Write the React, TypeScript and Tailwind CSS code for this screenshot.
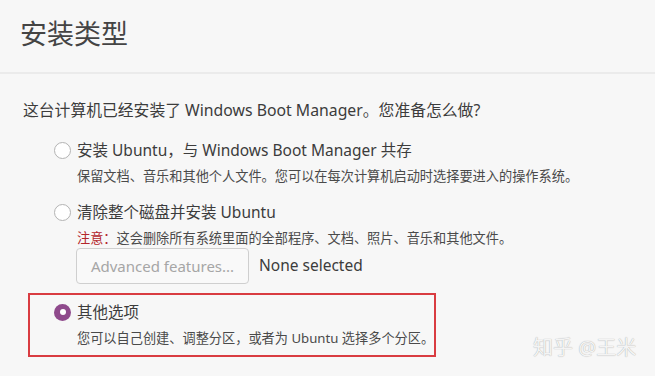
import React, { useState } from 'react';

const font = { fontFamily: '"Noto Sans", "Noto Sans CJK SC", sans-serif' };

interface RadioProps {
    checked: boolean
}

const Radio: React.FC<RadioProps> = ({ checked }) => {
    if (checked) {
        return (
            <span className="flex h-[17px] w-[17px] shrink-0 items-center justify-center rounded-full bg-[#8f4a8c]">
                <span className="h-[6px] w-[6px] rounded-full bg-white" />
            </span>
        );
    }
    return <span className="h-[17px] w-[17px] shrink-0 rounded-full border border-[#b3b3b3] bg-white" />;
};

export default function App() {
    const [choice, setChoice] = useState<number>(2);

    return (
        <div className="relative h-[376px] w-[655px] overflow-hidden bg-[#f7f7f7] text-[#3c3c3c]" style={font}>
            <div className="h-[74px] border-b-2 border-[#ebebeb] pl-[20px] pt-[16px]">
                <h1 className="text-[27px] leading-[36px] text-[#444]">安装类型</h1>
            </div>

            <p className="ml-[23px] mt-[24px] whitespace-nowrap text-[15.8px] leading-[24px]">
                这台计算机已经安装了 Windows Boot Manager。您准备怎么做?
            </p>

            <div className="ml-[54px] mt-[17px] flex flex-col">
                <div className="flex cursor-pointer items-center gap-[6px]" onClick={() => setChoice(0)}>
                    <Radio checked={choice === 0} />
                    <span className="text-[15.5px] leading-[22px]">安装 Ubuntu，与 Windows Boot Manager 共存</span>
                </div>
                <p className="ml-[23px] mt-[5px] whitespace-nowrap text-[13.2px] leading-[20px] text-[#4a4a4a]">
                    保留文档、音乐和其他个人文件。您可以在每次计算机启动时选择要进入的操作系统。
                </p>

                <div className="mt-[15px] flex cursor-pointer items-center gap-[6px]" onClick={() => setChoice(1)}>
                    <Radio checked={choice === 1} />
                    <span className="text-[15.5px] leading-[22px]">清除整个磁盘并安装 Ubuntu</span>
                </div>
                <p className="ml-[23px] mt-[5px] whitespace-nowrap text-[13.2px] leading-[20px] text-[#4a4a4a]">
                    <span className="text-[#b3262c]">注意：</span>这会删除所有系统里面的全部程序、文档、照片、音乐和其他文件。
                </p>
                <div className="ml-[22px] mt-[0px] flex items-center gap-[10px]">
                    <button className="h-[36px] w-[173px] rounded-[4px] border border-[#cfcfcf] bg-[#f9f9f9] text-[15px] text-[#a6a6a6]">
                        Advanced features...
                    </button>
                    <span className="text-[15.5px]">None selected</span>
                </div>
            </div>

            <div className="ml-[28px] mt-[9px] w-[408px] border-2 border-[#d93c41] pb-[7px] pl-[24px] pt-[6px]">
                <div className="flex cursor-pointer items-center gap-[6px]" onClick={() => setChoice(2)}>
                    <Radio checked={choice === 2} />
                    <span className="text-[15.5px] leading-[22px]">其他选项</span>
                </div>
                <p className="ml-[23px] mt-[5px] whitespace-nowrap text-[13.2px] leading-[20px] text-[#4a4a4a]">
                    您可以自己创建、调整分区，或者为 Ubuntu 选择多个分区。
                </p>
            </div>

            {/* watermark */}
            <div className="absolute left-[533px] top-[335px] text-[20px] leading-[26px] text-[#f4f4f4] [text-shadow:0_0_1px_#9a9a9a]">
                知乎 @王米
            </div>
        </div>
    );
}
